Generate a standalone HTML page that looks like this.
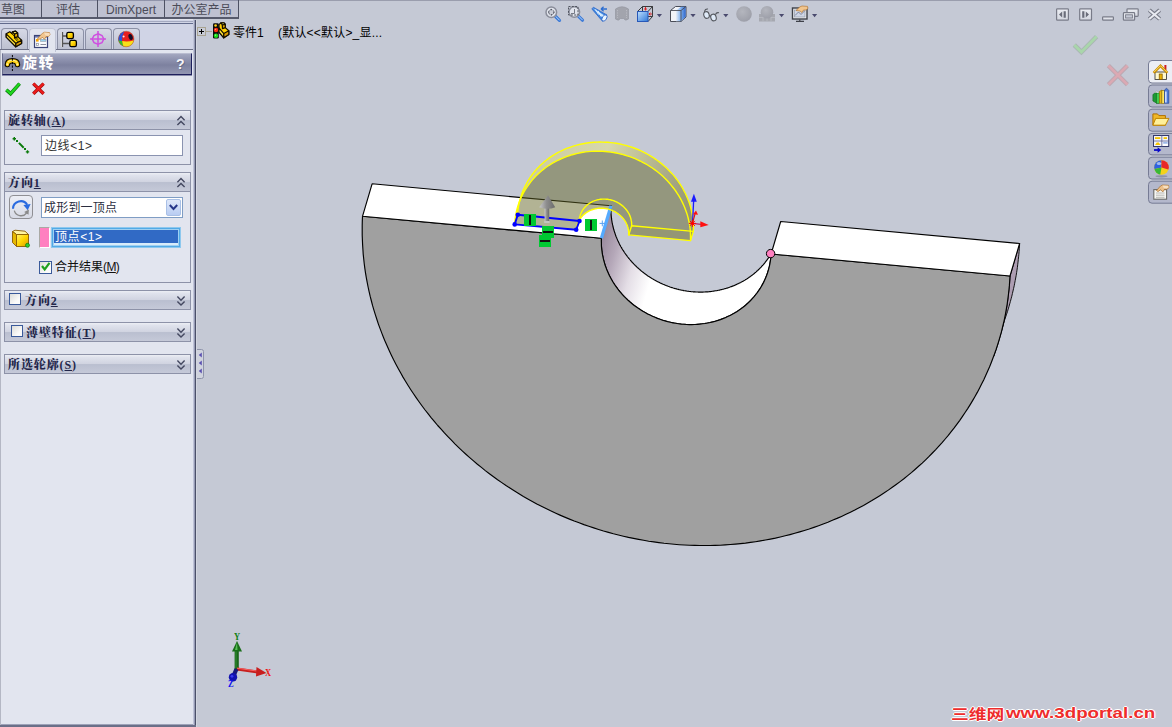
<!DOCTYPE html>
<html lang="zh-CN"><head><meta charset="utf-8"><title>SolidWorks - 旋转</title>
<style>
html,body{margin:0;padding:0;}
body{width:1172px;height:727px;overflow:hidden;background:#c5c9d5;font-family:"Liberation Sans","Noto Sans CJK SC",sans-serif;font-size:12px;color:#222;}
#app{position:relative;width:1172px;height:727px;overflow:hidden;background:#c5c9d5;}
.abs{position:absolute;}
/* top tabs */
#tabs{position:absolute;left:0;top:0;height:19px;width:239px;}
#tabs .tab{position:absolute;top:0;height:15px;padding-top:2px;border-right:1px solid #4d5163;border-bottom:2px solid #565a6c;background:#bec1d1;color:#4b4c58;font-size:12px;line-height:16px;text-align:center;white-space:nowrap;overflow:hidden;box-shadow:inset 0 1px 0 #9094aa;}
#topline{position:absolute;left:239px;top:0;width:933px;height:1px;background:#9a9dad;}
/* left panel */
#panel{position:absolute;left:0;top:20px;width:193px;height:704px;background:#e2e5ef;border-bottom:1px solid #9da2b8;}
#pbot{position:absolute;left:0;top:725px;width:196px;height:2px;background:#6a6f88;}
#pborder{position:absolute;left:193px;top:20px;width:4px;height:707px;background:linear-gradient(90deg,#bfc3d8 0 1px,#959ab4 1px 2px,#4b5069 2px 3px,#d3d6e0 3px 4px);}
#tabsub{position:absolute;left:0;top:19px;width:193px;height:1px;background:#dfe2ec;}
#pleft{position:absolute;left:0;top:20px;width:1px;height:707px;background:#b4b7c4;}
#ptop{position:absolute;left:0;top:20px;width:193px;height:30px;background:#d0d4e6;}
#ptop .l1{position:absolute;left:0;top:1px;width:193px;height:1px;background:#a3a8bf;}
#ptop .l2{position:absolute;left:0;top:3px;width:193px;height:1px;background:#626b8c;}
#ptop .l3{position:absolute;left:0;top:29px;width:193px;height:1px;background:#6c7086;z-index:1;}
.itab{position:absolute;top:8px;height:20px;width:25px;border:1px solid #8c91a6;border-bottom:none;border-radius:4px 4px 0 0;background:linear-gradient(#d6d9e6,#bcc0d0);}
.itab.act{background:#e2e5ef;height:23px;border-color:#c0c4d4;z-index:2;}
#title{position:absolute;left:2px;top:53px;width:188px;height:20px;background:linear-gradient(#a3a7c0 0%,#8a8eab 35%,#7d819f 55%,#9296b2 100%);border-right:1px solid #1d1f5c;border-bottom:1px solid #1d1f5c;box-shadow:0 1px 0 rgba(29,31,92,0.45);border-left:1px solid #6a6e8e;border-top:1px solid #b9bcd0;box-sizing:content-box;}
#title .t{position:absolute;left:19px;top:-1px;font-size:15px;font-weight:bold;color:#fff;line-height:20px;letter-spacing:1.6px;}
#title .q{position:absolute;left:173px;top:0;font-size:14px;font-weight:bold;color:#f4f4f8;line-height:20px;text-shadow:1px 1px 0 #6a6e8a;}
.sec{position:absolute;left:4px;width:185px;border:1px solid #8d92a8;background:#e2e5ef;}
.sec .hd{position:absolute;left:0;top:0;width:185px;height:18px;background:linear-gradient(#eceef4 0%,#dfe2ec 14%,#d1d4e1 48%,#babfd0 53%,#c5c9d8 100%);border-bottom:1px solid #8d92a8;}
.sec.closed .hd{border-bottom:none;}
.sec .hd .tx{position:absolute;left:3px;top:1px;line-height:18px;font-size:12px;font-weight:900;color:#23264a;white-space:nowrap;letter-spacing:0.9px;font-family:"Liberation Serif","Noto Serif CJK SC",serif;}
.sec .hd svg{position:absolute;left:171px;top:4px;}
.cb{position:absolute;width:10px;height:10px;border:1px solid #3a5a9a;background:linear-gradient(135deg,#dcdcd8,#fbfbfa 70%);}
.inp{position:absolute;border:1px solid #8a93b0;background:#fff;font-size:12px;color:#333;white-space:nowrap;}

.wm{line-height:18px;font-weight:bold;color:#ee2c2c;white-space:nowrap;text-shadow:-1px 0 #fff,1px 0 #fff,0 -1px #fff,0 1px #fff;transform-origin:0 0;}
.ax{font-family:'Liberation Serif',serif;font-weight:bold;font-size:10px;line-height:10px;transform-origin:0 0;transform:scaleX(0.85);}

</style></head>
<body>
<div id="app">

<svg id="model" width="1172" height="727" viewBox="0 0 1172 727" style="position:absolute;left:0;top:0">
<defs>
<linearGradient id="gi" gradientUnits="userSpaceOnUse" x1="600" y1="238" x2="658" y2="255">
<stop offset="0" stop-color="#96869a"/><stop offset="0.3" stop-color="#b5a8b9"/><stop offset="0.65" stop-color="#e4dee6"/><stop offset="1" stop-color="#ffffff"/>
</linearGradient>
<linearGradient id="go" gradientUnits="userSpaceOnUse" x1="520" y1="150" x2="700" y2="200">
<stop offset="0" stop-color="#c9c99a"/><stop offset="0.45" stop-color="#d9d9a8"/><stop offset="1" stop-color="#8a8a66"/>
</linearGradient>
</defs>
<g stroke="#000" stroke-width="1.15" stroke-linejoin="round">
<path d="M601.4,238.3 L601.4,238.9 L601.4,239.6 L601.4,240.2 L601.3,240.8 L601.3,241.4 L601.3,242.0 L601.3,242.6 L601.4,243.3 L601.4,243.9 L601.4,244.5 L601.4,245.1 L601.4,245.7 L601.5,246.3 L601.5,247.0 L601.6,247.6 L601.6,248.2 L601.7,248.8 L601.7,249.4 L601.8,250.0 L601.9,250.7 L602.0,251.3 L602.0,251.9 L602.1,252.5 L602.2,253.1 L602.3,253.7 L602.4,254.4 L602.5,255.0 L602.6,255.6 L602.8,256.2 L602.9,256.8 L603.0,257.4 L603.2,258.0 L603.3,258.6 L603.4,259.3 L603.6,259.9 L603.7,260.5 L603.9,261.1 L604.1,261.7 L604.2,262.3 L604.4,262.9 L604.6,263.5 L604.8,264.1 L605.0,264.7 L605.2,265.3 L605.4,265.9 L605.6,266.5 L605.8,267.1 L606.0,267.7 L606.2,268.3 L606.4,268.9 L606.7,269.5 L606.9,270.0 L607.2,270.6 L607.4,271.2 L607.7,271.8 L607.9,272.4 L608.2,273.0 L608.4,273.5 L608.7,274.1 L609.0,274.7 L609.3,275.3 L609.5,275.8 L609.8,276.4 L610.1,277.0 L610.4,277.6 L610.7,278.1 L611.0,278.7 L611.3,279.2 L611.7,279.8 L612.0,280.4 L612.3,280.9 L612.6,281.5 L613.0,282.0 L613.3,282.6 L613.7,283.1 L614.0,283.7 L614.4,284.2 L614.7,284.7 L615.1,285.3 L615.5,285.8 L615.8,286.3 L616.2,286.9 L616.6,287.4 L617.0,287.9 L617.4,288.4 L617.7,289.0 L618.1,289.5 L618.5,290.0 L618.9,290.5 L619.4,291.0 L619.8,291.5 L620.2,292.0 L620.6,292.5 L621.0,293.0 L621.5,293.5 L621.9,294.0 L622.3,294.5 L622.8,295.0 L623.2,295.5 L623.7,295.9 L624.1,296.4 L624.6,296.9 L625.1,297.3 L625.5,297.8 L626.0,298.3 L626.5,298.7 L626.9,299.2 L627.4,299.6 L627.9,300.1 L628.4,300.5 L628.9,301.0 L629.4,301.4 L629.9,301.9 L630.4,302.3 L630.9,302.7 L631.4,303.2 L631.9,303.6 L632.4,304.0 L632.9,304.4 L633.5,304.8 L634.0,305.2 L634.5,305.6 L635.0,306.0 L635.6,306.4 L636.1,306.8 L636.7,307.2 L637.2,307.6 L637.7,308.0 L638.3,308.4 L638.8,308.7 L639.4,309.1 L640.0,309.5 L640.5,309.8 L641.1,310.2 L641.7,310.5 L642.2,310.9 L642.8,311.2 L643.4,311.6 L644.0,311.9 L644.5,312.3 L645.1,312.6 L645.7,312.9 L646.3,313.2 L646.9,313.6 L647.5,313.9 L648.1,314.2 L648.7,314.5 L649.3,314.8 L649.9,315.1 L650.5,315.4 L651.1,315.7 L651.7,315.9 L652.3,316.2 L652.9,316.5 L653.5,316.8 L654.2,317.0 L654.8,317.3 L655.4,317.6 L656.0,317.8 L656.7,318.1 L657.3,318.3 L657.9,318.5 L658.5,318.8 L659.2,319.0 L659.8,319.2 L660.4,319.5 L661.1,319.7 L661.7,319.9 L662.4,320.1 L663.0,320.3 L663.6,320.5 L664.3,320.7 L664.9,320.9 L665.6,321.1 L666.2,321.3 L666.9,321.4 L667.5,321.6 L668.2,321.8 L668.8,321.9 L669.5,322.1 L670.2,322.2 L670.8,322.4 L671.5,322.5 L672.1,322.7 L672.8,322.8 L673.4,322.9 L674.1,323.1 L674.8,323.2 L675.4,323.3 L676.1,323.4 L676.8,323.5 L677.4,323.6 L678.1,323.7 L678.8,323.8 L679.4,323.9 L680.1,324.0 L680.8,324.0 L681.4,324.1 L682.1,324.2 L682.8,324.2 L683.4,324.3 L684.1,324.3 L684.8,324.4 L685.4,324.4 L686.1,324.5 L686.8,324.5 L687.4,324.5 L688.1,324.5 L688.8,324.6 L689.4,324.6 L690.1,324.6 L690.8,324.6 L691.4,324.6 L692.1,324.6 L692.8,324.6 L693.4,324.6 L694.1,324.5 L694.8,324.5 L695.4,324.5 L696.1,324.4 L696.8,324.4 L697.4,324.4 L698.1,324.3 L698.8,324.3 L699.4,324.2 L700.1,324.1 L700.7,324.1 L701.4,324.0 L702.1,323.9 L702.7,323.8 L703.4,323.7 L704.0,323.6 L704.7,323.5 L705.3,323.4 L706.0,323.3 L706.6,323.2 L707.3,323.1 L707.9,323.0 L708.6,322.8 L709.2,322.7 L709.9,322.6 L710.5,322.4 L711.1,322.3 L711.8,322.1 L712.4,322.0 L713.0,321.8 L713.7,321.7 L714.3,321.5 L714.9,321.3 L715.6,321.1 L716.2,321.0 L716.8,320.8 L717.4,320.6 L718.1,320.4 L718.7,320.2 L719.3,320.0 L719.9,319.8 L720.5,319.5 L721.1,319.3 L721.7,319.1 L722.4,318.9 L723.0,318.6 L723.6,318.4 L724.2,318.2 L724.8,317.9 L725.3,317.7 L725.9,317.4 L726.5,317.1 L727.1,316.9 L727.7,316.6 L728.3,316.3 L728.9,316.1 L729.4,315.8 L730.0,315.5 L730.6,315.2 L731.2,314.9 L731.7,314.6 L732.3,314.3 L732.8,314.0 L733.4,313.7 L734.0,313.4 L734.5,313.0 L735.1,312.7 L735.6,312.4 L736.1,312.0 L736.7,311.7 L737.2,311.4 L737.8,311.0 L738.3,310.7 L738.8,310.3 L739.3,310.0 L739.9,309.6 L740.4,309.2 L740.9,308.9 L741.4,308.5 L741.9,308.1 L742.4,307.7 L742.9,307.4 L743.4,307.0 L743.9,306.6 L744.4,306.2 L744.9,305.8 L745.3,305.4 L745.8,305.0 L746.3,304.6 L746.8,304.1 L747.2,303.7 L747.7,303.3 L748.2,302.9 L748.6,302.5 L749.1,302.0 L749.5,301.6 L750.0,301.1 L750.4,300.7 L750.8,300.3 L751.3,299.8 L751.7,299.4 L752.1,298.9 L752.5,298.4 L753.0,298.0 L753.4,297.5 L753.8,297.1 L754.2,296.6 L754.6,296.1 L755.0,295.6 L755.4,295.1 L755.7,294.7 L756.1,294.2 L756.5,293.7 L756.9,293.2 L757.3,292.7 L757.6,292.2 L758.0,291.7 L758.3,291.2 L758.7,290.7 L759.0,290.2 L759.4,289.7 L759.7,289.1 L760.0,288.6 L760.4,288.1 L760.7,287.6 L761.0,287.1 L761.3,286.5 L761.6,286.0 L761.9,285.5 L762.2,284.9 L762.5,284.4 L762.8,283.9 L763.1,283.3 L763.4,282.8 L763.7,282.2 L763.9,281.7 L764.2,281.1 L764.5,280.6 L764.7,280.0 L765.0,279.4 L765.2,278.9 L765.5,278.3 L765.7,277.8 L765.9,277.2 L766.2,276.6 L766.4,276.1 L766.6,275.5 L766.8,274.9 L767.0,274.3 L767.2,273.8 L767.4,273.2 L767.6,272.6 L767.8,272.0 L768.0,271.4 L768.2,270.8 L768.4,270.3 L768.5,269.7 L768.7,269.1 L768.8,268.5 L769.0,267.9 L769.1,267.3 L769.3,266.7 L769.4,266.1 L769.6,265.5 L769.7,264.9 L769.8,264.3 L769.9,263.7 L770.0,263.1 L770.1,262.5 L770.2,261.9 L770.3,261.3 L770.4,260.7 L770.5,260.1 L770.6,259.5 L770.7,258.9 L770.7,258.3 L770.8,257.6 L770.9,257.0 L770.9,256.4 L771.0,255.8 L771.0,255.2 L771.0,254.6 L771.1,254.0 L770.9,254.0 L770.6,254.6 L770.3,255.1 L770.0,255.6 L769.6,256.1 L769.3,256.6 L769.0,257.2 L768.6,257.7 L768.3,258.2 L767.9,258.7 L767.6,259.2 L767.2,259.7 L766.9,260.2 L766.5,260.7 L766.1,261.2 L765.7,261.7 L765.3,262.2 L765.0,262.6 L764.6,263.1 L764.2,263.6 L763.8,264.1 L763.4,264.6 L763.0,265.0 L762.6,265.5 L762.1,265.9 L761.7,266.4 L761.3,266.9 L760.9,267.3 L760.4,267.8 L760.0,268.2 L759.6,268.6 L759.1,269.1 L758.7,269.5 L758.2,270.0 L757.8,270.4 L757.3,270.8 L756.8,271.2 L756.4,271.6 L755.9,272.1 L755.4,272.5 L754.9,272.9 L754.5,273.3 L754.0,273.7 L753.5,274.1 L753.0,274.5 L752.5,274.9 L752.0,275.2 L751.5,275.6 L751.0,276.0 L750.5,276.4 L750.0,276.7 L749.5,277.1 L748.9,277.5 L748.4,277.8 L747.9,278.2 L747.4,278.5 L746.8,278.9 L746.3,279.2 L745.7,279.5 L745.2,279.9 L744.7,280.2 L744.1,280.5 L743.6,280.9 L743.0,281.2 L742.4,281.5 L741.9,281.8 L741.3,282.1 L740.8,282.4 L740.2,282.7 L739.6,283.0 L739.0,283.3 L738.5,283.6 L737.9,283.8 L737.3,284.1 L736.7,284.4 L736.1,284.6 L735.5,284.9 L734.9,285.2 L734.4,285.4 L733.8,285.7 L733.2,285.9 L732.6,286.1 L732.0,286.4 L731.3,286.6 L730.7,286.8 L730.1,287.0 L729.5,287.3 L728.9,287.5 L728.3,287.7 L727.7,287.9 L727.0,288.1 L726.4,288.3 L725.8,288.5 L725.2,288.6 L724.5,288.8 L723.9,289.0 L723.3,289.2 L722.6,289.3 L722.0,289.5 L721.4,289.6 L720.7,289.8 L720.1,289.9 L719.5,290.1 L718.8,290.2 L718.2,290.3 L717.5,290.5 L716.9,290.6 L716.2,290.7 L715.6,290.8 L714.9,290.9 L714.3,291.0 L713.6,291.1 L713.0,291.2 L712.3,291.3 L711.7,291.4 L711.0,291.5 L710.3,291.6 L709.7,291.6 L709.0,291.7 L708.4,291.8 L707.7,291.8 L707.0,291.9 L706.4,291.9 L705.7,291.9 L705.0,292.0 L704.4,292.0 L703.7,292.0 L703.0,292.1 L702.4,292.1 L701.7,292.1 L701.0,292.1 L700.4,292.1 L699.7,292.1 L699.0,292.1 L698.4,292.1 L697.7,292.0 L697.0,292.0 L696.4,292.0 L695.7,292.0 L695.0,291.9 L694.4,291.9 L693.7,291.8 L693.0,291.8 L692.4,291.7 L691.7,291.7 L691.0,291.6 L690.4,291.5 L689.7,291.5 L689.0,291.4 L688.4,291.3 L687.7,291.2 L687.0,291.1 L686.4,291.0 L685.7,290.9 L685.0,290.8 L684.4,290.7 L683.7,290.6 L683.0,290.4 L682.4,290.3 L681.7,290.2 L681.1,290.0 L680.4,289.9 L679.8,289.7 L679.1,289.6 L678.4,289.4 L677.8,289.3 L677.1,289.1 L676.5,288.9 L675.8,288.8 L675.2,288.6 L674.5,288.4 L673.9,288.2 L673.2,288.0 L672.6,287.8 L672.0,287.6 L671.3,287.4 L670.7,287.2 L670.0,287.0 L669.4,286.7 L668.8,286.5 L668.1,286.3 L667.5,286.0 L666.9,285.8 L666.3,285.6 L665.6,285.3 L665.0,285.1 L664.4,284.8 L663.8,284.5 L663.1,284.3 L662.5,284.0 L661.9,283.7 L661.3,283.4 L660.7,283.2 L660.1,282.9 L659.5,282.6 L658.9,282.3 L658.3,282.0 L657.7,281.7 L657.1,281.4 L656.5,281.1 L655.9,280.7 L655.3,280.4 L654.7,280.1 L654.1,279.8 L653.6,279.4 L653.0,279.1 L652.4,278.7 L651.8,278.4 L651.3,278.0 L650.7,277.7 L650.1,277.3 L649.6,277.0 L649.0,276.6 L648.4,276.2 L647.9,275.9 L647.3,275.5 L646.8,275.1 L646.3,274.7 L645.7,274.3 L645.2,273.9 L644.6,273.5 L644.1,273.1 L643.6,272.7 L643.1,272.3 L642.5,271.9 L642.0,271.5 L641.5,271.1 L641.0,270.7 L640.5,270.2 L640.0,269.8 L639.5,269.4 L639.0,268.9 L638.5,268.5 L638.0,268.0 L637.5,267.6 L637.0,267.1 L636.5,266.7 L636.1,266.2 L635.6,265.8 L635.1,265.3 L634.7,264.8 L634.2,264.4 L633.7,263.9 L633.3,263.4 L632.8,263.0 L632.4,262.5 L631.9,262.0 L631.5,261.5 L631.1,261.0 L630.6,260.5 L630.2,260.0 L629.8,259.5 L629.4,259.0 L629.0,258.5 L628.5,258.0 L628.1,257.5 L627.7,257.0 L627.3,256.5 L627.0,255.9 L626.6,255.4 L626.2,254.9 L625.8,254.4 L625.4,253.8 L625.1,253.3 L624.7,252.8 L624.3,252.2 L624.0,251.7 L623.6,251.2 L623.3,250.6 L622.9,250.1 L622.6,249.5 L622.2,249.0 L621.9,248.4 L621.6,247.9 L621.3,247.3 L620.9,246.7 L620.6,246.2 L620.3,245.6 L620.0,245.1 L619.7,244.5 L619.4,243.9 L619.1,243.3 L618.9,242.8 L618.6,242.2 L618.3,241.6 L618.0,241.0 L617.8,240.5 L617.5,239.9 L617.3,239.3 L617.0,238.7 L616.8,238.1 L616.5,237.5 L616.3,237.0 L616.0,236.4 L615.8,235.8 L615.6,235.2 L615.4,234.6 L615.2,234.0 L615.0,233.4 L614.8,232.8 L614.6,232.2 L614.4,231.6 L614.2,231.0 L614.0,230.4 L613.8,229.8 L613.7,229.2 L613.5,228.6 L613.3,228.0 L613.2,227.4 L613.0,226.8 L612.9,226.1 L612.8,225.5 L612.6,224.9 L612.5,224.3 L612.4,223.7 L612.2,223.1 L612.1,222.5 L612.0,221.9 L611.9,221.2 L611.8,220.6 L611.7,220.0 L611.6,219.4 L611.6,218.8 L611.5,218.2 L611.4,217.5 L611.3,216.9 L611.3,216.3 L611.2,215.7 L611.2,215.1 L611.1,214.5 L611.1,213.8 L611.0,213.2 L611.0,212.6 L611.0,212.0 L611.0,211.4 L611.0,210.8 L610.9,210.1 L610.9,209.5 L610.9,208.9 L610.9,208.3 L611.0,207.7 L611.0,207.1 L611.0,206.4 L611.0,205.8Z" fill="url(#gi)"/>
<path d="M1010.0,276.0 L1009.9,278.7 L1009.7,281.3 L1009.5,284.0 L1009.3,286.7 L1009.0,289.3 L1008.7,292.0 L1008.4,294.6 L1008.1,297.3 L1007.8,299.9 L1007.4,302.6 L1007.0,305.2 L1006.6,307.8 L1006.1,310.5 L1005.6,313.1 L1005.1,315.7 L1004.6,318.3 L1004.0,320.9 L1003.4,323.5 L1002.8,326.1 L1002.2,328.7 L1001.5,331.3 L1000.8,333.9 L1000.1,336.4 L999.4,339.0 L998.6,341.5 L997.9,344.1 L997.0,346.6 L996.2,349.1 L995.3,351.7 L994.5,354.2 L993.5,356.7 L1004.1,321.7 L1004.9,319.2 L1005.8,316.6 L1006.6,314.1 L1007.5,311.6 L1008.2,309.0 L1009.0,306.5 L1009.7,303.9 L1010.4,301.4 L1011.1,298.8 L1011.8,296.2 L1012.4,293.6 L1013.0,291.0 L1013.6,288.4 L1014.2,285.8 L1014.7,283.2 L1015.2,280.6 L1015.7,278.0 L1016.2,275.3 L1016.6,272.7 L1017.0,270.1 L1017.4,267.4 L1017.7,264.8 L1018.0,262.1 L1018.3,259.5 L1018.6,256.8 L1018.9,254.2 L1019.1,251.5 L1019.3,248.8 L1019.5,246.2 L1019.6,243.5Z" fill="#ad9db2" stroke-width="0.9"/>
<path d="M1010.0,276.0 L1009.7,280.7 L1009.4,285.4 L1008.9,290.1 L1008.4,294.7 L1007.8,299.4 L1007.2,304.0 L1006.4,308.7 L1005.6,313.3 L1004.7,317.9 L1003.7,322.5 L1002.6,327.0 L1001.5,331.6 L1000.2,336.1 L998.9,340.6 L997.5,345.1 L996.1,349.5 L994.5,353.9 L992.9,358.3 L991.2,362.7 L989.5,367.0 L987.6,371.3 L985.7,375.6 L983.7,379.9 L981.6,384.1 L979.5,388.2 L977.3,392.4 L975.0,396.5 L972.6,400.6 L970.2,404.6 L967.7,408.6 L965.1,412.5 L962.5,416.4 L959.8,420.3 L957.0,424.1 L954.2,427.9 L951.2,431.6 L948.3,435.3 L945.2,439.0 L942.1,442.6 L938.9,446.1 L935.7,449.6 L932.4,453.0 L929.1,456.4 L925.6,459.8 L922.2,463.1 L918.6,466.3 L915.0,469.5 L911.4,472.6 L907.7,475.6 L903.9,478.7 L900.1,481.6 L896.2,484.5 L892.3,487.3 L888.3,490.1 L884.3,492.8 L880.2,495.4 L876.1,498.0 L871.9,500.6 L867.7,503.0 L863.5,505.4 L859.1,507.7 L854.8,510.0 L850.4,512.2 L846.0,514.3 L841.5,516.4 L837.0,518.4 L832.4,520.3 L827.9,522.2 L823.2,524.0 L818.6,525.7 L813.9,527.4 L809.2,529.0 L804.4,530.5 L799.7,531.9 L794.8,533.3 L790.0,534.6 L785.2,535.8 L780.3,537.0 L775.4,538.1 L770.4,539.1 L765.5,540.0 L760.5,540.9 L755.5,541.7 L750.5,542.4 L745.5,543.1 L740.5,543.6 L735.4,544.1 L730.3,544.5 L725.3,544.9 L720.2,545.2 L715.1,545.4 L710.0,545.5 L704.9,545.5 L699.8,545.5 L694.7,545.4 L689.6,545.2 L684.4,545.0 L679.3,544.7 L674.2,544.3 L669.1,543.8 L664.0,543.3 L658.9,542.6 L653.8,541.9 L648.7,541.2 L643.6,540.3 L638.6,539.4 L633.5,538.4 L628.5,537.4 L623.4,536.2 L618.4,535.0 L613.4,533.8 L608.5,532.4 L603.5,531.0 L598.6,529.5 L593.7,527.9 L588.8,526.3 L583.9,524.6 L579.1,522.8 L574.2,521.0 L569.5,519.1 L564.7,517.1 L560.0,515.1 L555.3,513.0 L550.6,510.8 L546.0,508.5 L541.4,506.2 L536.8,503.9 L532.3,501.4 L527.8,498.9 L523.4,496.4 L519.0,493.7 L514.6,491.0 L510.3,488.3 L506.0,485.5 L501.8,482.6 L497.6,479.7 L493.5,476.7 L489.4,473.7 L485.3,470.6 L481.4,467.4 L477.4,464.2 L473.5,460.9 L469.7,457.6 L465.9,454.2 L462.2,450.8 L458.5,447.3 L454.9,443.8 L451.4,440.2 L447.9,436.6 L444.4,432.9 L441.1,429.2 L437.7,425.5 L434.5,421.6 L431.3,417.8 L428.2,413.9 L425.1,410.0 L422.1,406.0 L419.2,402.0 L416.3,397.9 L413.5,393.8 L410.8,389.7 L408.1,385.5 L405.5,381.3 L403.0,377.1 L400.6,372.8 L398.2,368.5 L395.9,364.2 L393.6,359.8 L391.5,355.5 L389.4,351.0 L387.4,346.6 L385.4,342.1 L383.6,337.7 L381.8,333.1 L380.1,328.6 L378.4,324.1 L376.9,319.5 L375.4,314.9 L374.0,310.3 L372.6,305.7 L371.4,301.0 L370.2,296.4 L369.1,291.7 L368.1,287.0 L367.2,282.3 L366.3,277.6 L365.5,272.9 L364.8,268.2 L364.2,263.5 L363.7,258.8 L363.2,254.1 L362.9,249.3 L362.6,244.6 L362.4,239.9 L362.2,235.2 L362.2,230.4 L362.2,225.7 L362.3,221.0 L362.5,216.3 L601.4,238.3 L601.3,240.8 L601.4,243.3 L601.4,245.8 L601.6,248.3 L601.9,250.8 L602.2,253.2 L602.7,255.7 L603.2,258.2 L603.8,260.6 L604.5,263.1 L605.2,265.5 L606.1,267.9 L607.0,270.3 L608.0,272.6 L609.1,275.0 L610.3,277.3 L611.5,279.5 L612.8,281.8 L614.2,284.0 L615.7,286.1 L617.2,288.2 L618.8,290.3 L620.5,292.4 L622.2,294.4 L624.0,296.3 L625.9,298.2 L627.8,300.0 L629.8,301.8 L631.8,303.5 L633.9,305.2 L636.1,306.8 L638.3,308.3 L640.5,309.8 L642.8,311.3 L645.2,312.6 L647.5,313.9 L650.0,315.1 L652.4,316.3 L654.9,317.3 L657.4,318.4 L660.0,319.3 L662.5,320.2 L665.1,320.9 L667.8,321.7 L670.4,322.3 L673.0,322.9 L675.7,323.3 L678.4,323.7 L681.1,324.1 L683.8,324.3 L686.5,324.5 L689.2,324.6 L691.8,324.6 L694.5,324.5 L697.2,324.4 L699.9,324.1 L702.5,323.8 L705.2,323.5 L707.8,323.0 L710.4,322.5 L712.9,321.9 L715.5,321.2 L718.0,320.4 L720.5,319.6 L722.9,318.6 L725.3,317.7 L727.7,316.6 L730.1,315.5 L732.3,314.3 L734.6,313.0 L736.8,311.7 L738.9,310.3 L741.0,308.8 L743.0,307.3 L745.0,305.7 L746.9,304.0 L748.8,302.3 L750.6,300.5 L752.3,298.7 L753.9,296.9 L755.5,294.9 L757.1,293.0 L758.5,290.9 L759.9,288.9 L761.2,286.8 L762.4,284.6 L763.6,282.4 L764.6,280.2 L765.6,277.9 L766.6,275.6 L767.4,273.3 L768.1,271.0 L768.8,268.6 L769.4,266.2 L769.9,263.8 L770.3,261.4 L770.7,258.9 L770.9,256.4 L771.1,254.0Z" fill="#a0a0a0"/>
<path d="M362.5,216.3 L372.1,183.8 L611.0,205.8 L601.4,238.3Z" fill="#ffffff"/>
<path d="M771.1,254.0 L780.7,221.5 L1019.6,243.5 L1010.0,276.0Z" fill="#ffffff"/>
</g>
<!-- preview body -->
<g stroke="none">
<path d="M517.5,215.2 L517.7,212.7 L517.9,210.1 L518.3,207.6 L518.7,205.0 L519.2,202.5 L519.9,200.1 L520.5,197.6 L521.3,195.2 L522.2,192.8 L523.1,190.4 L524.2,188.0 L525.3,185.7 L526.5,183.5 L527.7,181.2 L529.1,179.1 L530.5,176.9 L532.0,174.8 L533.6,172.8 L535.3,170.8 L537.0,168.8 L538.8,167.0 L540.6,165.1 L542.5,163.4 L544.5,161.6 L546.6,160.0 L548.7,158.4 L550.8,156.9 L553.1,155.4 L555.3,154.1 L557.7,152.7 L560.0,151.5 L562.4,150.3 L564.9,149.2 L567.4,148.2 L569.9,147.3 L572.5,146.4 L575.1,145.6 L577.7,144.9 L580.4,144.2 L583.1,143.7 L585.8,143.2 L588.5,142.8 L591.3,142.5 L594.1,142.3 L596.8,142.1 L599.6,142.0 L602.4,142.1 L605.2,142.2 L608.0,142.3 L610.8,142.6 L613.6,142.9 L616.3,143.3 L619.1,143.8 L621.8,144.4 L624.6,145.1 L627.3,145.8 L630.0,146.6 L632.7,147.5 L635.3,148.5 L637.9,149.5 L640.5,150.7 L643.0,151.9 L645.5,153.1 L648.0,154.5 L650.4,155.9 L652.8,157.3 L655.1,158.9 L657.4,160.5 L659.6,162.1 L661.8,163.9 L663.9,165.7 L666.0,167.5 L668.0,169.4 L669.9,171.4 L671.8,173.4 L673.6,175.4 L675.3,177.5 L677.0,179.7 L678.5,181.9 L680.1,184.1 L681.5,186.4 L682.9,188.7 L684.1,191.1 L685.4,193.5 L686.5,195.9 L687.5,198.3 L688.5,200.8 L689.4,203.3 L690.2,205.8 L690.9,208.3 L691.5,210.9 L692.0,213.4 L692.5,216.0 L692.8,218.5 L693.1,221.1 L693.3,223.7 L693.4,226.3 L693.4,228.9 L693.3,231.4 L690.5,240.6 L690.5,238.0 L690.5,235.4 L690.4,232.8 L690.3,230.3 L690.0,227.7 L689.6,225.1 L689.2,222.5 L688.6,220.0 L688.0,217.4 L687.3,214.9 L686.5,212.4 L685.6,209.9 L684.7,207.5 L683.6,205.0 L682.5,202.6 L681.3,200.2 L680.0,197.9 L678.7,195.6 L677.2,193.3 L675.7,191.0 L674.1,188.8 L672.4,186.7 L670.7,184.6 L668.9,182.5 L667.1,180.5 L665.1,178.5 L663.1,176.6 L661.1,174.8 L659.0,173.0 L656.8,171.3 L654.6,169.6 L652.3,168.0 L649.9,166.5 L647.6,165.0 L645.2,163.6 L642.7,162.3 L640.2,161.0 L637.6,159.8 L635.1,158.7 L632.5,157.6 L629.8,156.7 L627.1,155.8 L624.4,155.0 L621.7,154.2 L619.0,153.6 L616.2,153.0 L613.5,152.5 L610.7,152.1 L607.9,151.7 L605.1,151.5 L602.3,151.3 L599.6,151.2 L596.8,151.2 L594.0,151.3 L591.2,151.4 L588.4,151.6 L585.7,151.9 L583.0,152.3 L580.3,152.8 L577.6,153.4 L574.9,154.0 L572.3,154.7 L569.7,155.5 L567.1,156.4 L564.6,157.3 L562.1,158.4 L559.6,159.5 L557.2,160.6 L554.8,161.9 L552.5,163.2 L550.2,164.6 L548.0,166.0 L545.8,167.5 L543.7,169.1 L541.7,170.8 L539.7,172.5 L537.8,174.3 L535.9,176.1 L534.1,178.0 L532.4,179.9 L530.8,181.9 L529.2,184.0 L527.7,186.1 L526.3,188.2 L524.9,190.4 L523.6,192.6 L522.4,194.9 L521.3,197.2 L520.3,199.5 L519.3,201.9 L518.5,204.3 L517.7,206.7 L517.0,209.2 L516.4,211.7 L515.9,214.2 L515.4,216.7 L515.1,219.2 L514.8,221.8 L514.7,224.4Z" fill="url(#go)" fill-opacity="0.9"/>
<path d="M514.7,224.4 L514.8,221.8 L515.1,219.2 L515.4,216.7 L515.9,214.2 L516.4,211.7 L517.0,209.2 L517.7,206.7 L518.5,204.3 L519.3,201.9 L520.3,199.5 L521.3,197.2 L522.4,194.9 L523.6,192.6 L524.9,190.4 L526.3,188.2 L527.7,186.1 L529.2,184.0 L530.8,181.9 L532.4,179.9 L534.1,178.0 L535.9,176.1 L537.8,174.3 L539.7,172.5 L541.7,170.8 L543.7,169.1 L545.8,167.5 L548.0,166.0 L550.2,164.6 L552.5,163.2 L554.8,161.9 L557.2,160.6 L559.6,159.5 L562.1,158.4 L564.6,157.3 L567.1,156.4 L569.7,155.5 L572.3,154.7 L574.9,154.0 L577.6,153.4 L580.3,152.8 L583.0,152.3 L585.7,151.9 L588.4,151.6 L591.2,151.4 L594.0,151.3 L596.8,151.2 L599.6,151.2 L602.3,151.3 L605.1,151.5 L607.9,151.7 L610.7,152.1 L613.5,152.5 L616.2,153.0 L619.0,153.6 L621.7,154.2 L624.4,155.0 L627.1,155.8 L629.8,156.7 L632.5,157.6 L635.1,158.7 L637.6,159.8 L640.2,161.0 L642.7,162.3 L645.2,163.6 L647.6,165.0 L649.9,166.5 L652.3,168.0 L654.6,169.6 L656.8,171.3 L659.0,173.0 L661.1,174.8 L663.1,176.6 L665.1,178.5 L667.1,180.5 L668.9,182.5 L670.7,184.6 L672.4,186.7 L674.1,188.8 L675.7,191.0 L677.2,193.3 L678.7,195.6 L680.0,197.9 L681.3,200.2 L682.5,202.6 L683.6,205.0 L684.7,207.5 L685.6,209.9 L686.5,212.4 L687.3,214.9 L688.0,217.4 L688.6,220.0 L689.2,222.5 L689.6,225.1 L690.0,227.7 L690.3,230.3 L690.4,232.8 L690.5,235.4 L690.5,238.0 L690.5,240.6 L628.8,234.9 L628.8,234.1 L628.8,233.3 L628.8,232.6 L628.7,231.8 L628.6,231.0 L628.5,230.3 L628.4,229.5 L628.2,228.7 L628.1,228.0 L627.9,227.2 L627.6,226.5 L627.4,225.7 L627.1,225.0 L626.8,224.3 L626.4,223.6 L626.1,222.8 L625.7,222.1 L625.3,221.4 L624.8,220.8 L624.4,220.1 L623.9,219.4 L623.4,218.8 L622.9,218.2 L622.4,217.6 L621.8,217.0 L621.2,216.4 L620.6,215.8 L620.0,215.3 L619.4,214.7 L618.7,214.2 L618.1,213.7 L617.4,213.2 L616.7,212.8 L616.0,212.3 L615.3,211.9 L614.5,211.5 L613.8,211.1 L613.0,210.8 L612.3,210.4 L611.5,210.1 L610.7,209.8 L609.9,209.6 L609.1,209.3 L608.3,209.1 L607.5,208.9 L606.6,208.7 L605.8,208.6 L605.0,208.5 L604.2,208.4 L603.3,208.3 L602.5,208.2 L601.7,208.2 L600.8,208.2 L600.0,208.2 L599.2,208.3 L598.4,208.3 L597.5,208.4 L596.7,208.6 L595.9,208.7 L595.1,208.9 L594.3,209.1 L593.5,209.3 L592.7,209.5 L592.0,209.8 L591.2,210.0 L590.5,210.4 L589.7,210.7 L589.0,211.0 L588.3,211.4 L587.6,211.8 L587.0,212.2 L586.3,212.6 L585.6,213.1 L585.0,213.6 L584.4,214.1 L583.8,214.6 L583.2,215.1 L582.7,215.6 L582.2,216.2 L581.6,216.8 L581.1,217.4 L580.7,218.0 L580.2,218.6 L579.8,219.3 L579.4,219.9 L579.0,220.6 L578.7,221.2 L578.3,221.9 L578.0,222.6 L577.7,223.3 L577.5,224.1 L577.2,224.8 L577.0,225.5 L576.9,226.3 L576.7,227.0 L576.6,227.8 L576.5,228.5 L576.4,229.3 L576.3,230.0Z" fill="rgb(98,100,36)" fill-opacity="0.49"/>
<path d="M690.5,240.6 L693.3,231.4 L631.6,225.7 L628.8,234.9Z" fill="rgb(150,150,60)" fill-opacity="0.12"/>
<path d="M514.7,224.4 L517.5,215.2 L579.2,220.9 L576.3,230.0Z" fill="#b8b99a" fill-opacity="0.0"/>
</g>
<!-- selected axis edge -->
<path d="M611.0,205.8 L601.4,238.3" stroke="#55aaff" stroke-width="3.2" stroke-linecap="butt"/>
<g fill="none" stroke="#ffff00" stroke-width="1.4" stroke-linejoin="round" stroke-linecap="round">
<path d="M514.7,224.4 L514.8,221.8 L515.1,219.2 L515.4,216.7 L515.9,214.2 L516.4,211.7 L517.0,209.2 L517.7,206.7 L518.5,204.3 L519.3,201.9 L520.3,199.5 L521.3,197.2 L522.4,194.9 L523.6,192.6 L524.9,190.4 L526.3,188.2 L527.7,186.1 L529.2,184.0 L530.8,181.9 L532.4,179.9 L534.1,178.0 L535.9,176.1 L537.8,174.3 L539.7,172.5 L541.7,170.8 L543.7,169.1 L545.8,167.5 L548.0,166.0 L550.2,164.6 L552.5,163.2 L554.8,161.9 L557.2,160.6 L559.6,159.5 L562.1,158.4 L564.6,157.3 L567.1,156.4 L569.7,155.5 L572.3,154.7 L574.9,154.0 L577.6,153.4 L580.3,152.8 L583.0,152.3 L585.7,151.9 L588.4,151.6 L591.2,151.4 L594.0,151.3 L596.8,151.2 L599.6,151.2 L602.3,151.3 L605.1,151.5 L607.9,151.7 L610.7,152.1 L613.5,152.5 L616.2,153.0 L619.0,153.6 L621.7,154.2 L624.4,155.0 L627.1,155.8 L629.8,156.7 L632.5,157.6 L635.1,158.7 L637.6,159.8 L640.2,161.0 L642.7,162.3 L645.2,163.6 L647.6,165.0 L649.9,166.5 L652.3,168.0 L654.6,169.6 L656.8,171.3 L659.0,173.0 L661.1,174.8 L663.1,176.6 L665.1,178.5 L667.1,180.5 L668.9,182.5 L670.7,184.6 L672.4,186.7 L674.1,188.8 L675.7,191.0 L677.2,193.3 L678.7,195.6 L680.0,197.9 L681.3,200.2 L682.5,202.6 L683.6,205.0 L684.7,207.5 L685.6,209.9 L686.5,212.4 L687.3,214.9 L688.0,217.4 L688.6,220.0 L689.2,222.5 L689.6,225.1 L690.0,227.7 L690.3,230.3 L690.4,232.8 L690.5,235.4 L690.5,238.0 L690.5,240.6"/><path d="M517.5,215.2 L517.7,212.7 L517.9,210.1 L518.3,207.6 L518.7,205.0 L519.2,202.5 L519.9,200.1 L520.5,197.6 L521.3,195.2 L522.2,192.8 L523.1,190.4 L524.2,188.0 L525.3,185.7 L526.5,183.5 L527.7,181.2 L529.1,179.1 L530.5,176.9 L532.0,174.8 L533.6,172.8 L535.3,170.8 L537.0,168.8 L538.8,167.0 L540.6,165.1 L542.5,163.4 L544.5,161.6 L546.6,160.0 L548.7,158.4 L550.8,156.9 L553.1,155.4 L555.3,154.1 L557.7,152.7 L560.0,151.5 L562.4,150.3 L564.9,149.2 L567.4,148.2 L569.9,147.3 L572.5,146.4 L575.1,145.6 L577.7,144.9 L580.4,144.2 L583.1,143.7 L585.8,143.2 L588.5,142.8 L591.3,142.5 L594.1,142.3 L596.8,142.1 L599.6,142.0 L602.4,142.1 L605.2,142.2 L608.0,142.3 L610.8,142.6 L613.6,142.9 L616.3,143.3 L619.1,143.8 L621.8,144.4 L624.6,145.1 L627.3,145.8 L630.0,146.6 L632.7,147.5 L635.3,148.5 L637.9,149.5 L640.5,150.7 L643.0,151.9 L645.5,153.1 L648.0,154.5 L650.4,155.9 L652.8,157.3 L655.1,158.9 L657.4,160.5 L659.6,162.1 L661.8,163.9 L663.9,165.7 L666.0,167.5 L668.0,169.4 L669.9,171.4 L671.8,173.4 L673.6,175.4 L675.3,177.5 L677.0,179.7 L678.5,181.9 L680.1,184.1 L681.5,186.4 L682.9,188.7 L684.1,191.1 L685.4,193.5 L686.5,195.9 L687.5,198.3 L688.5,200.8 L689.4,203.3 L690.2,205.8 L690.9,208.3 L691.5,210.9 L692.0,213.4 L692.5,216.0 L692.8,218.5 L693.1,221.1 L693.3,223.7 L693.4,226.3 L693.4,228.9 L693.3,231.4"/><path d="M576.3,230.0 L576.4,229.3 L576.5,228.5 L576.6,227.8 L576.7,227.0 L576.9,226.3 L577.0,225.5 L577.2,224.8 L577.5,224.1 L577.7,223.3 L578.0,222.6 L578.3,221.9 L578.7,221.2 L579.0,220.6 L579.4,219.9 L579.8,219.3 L580.2,218.6 L580.7,218.0 L581.1,217.4 L581.6,216.8 L582.2,216.2 L582.7,215.6 L583.2,215.1 L583.8,214.6 L584.4,214.1 L585.0,213.6 L585.6,213.1 L586.3,212.6 L587.0,212.2 L587.6,211.8 L588.3,211.4 L589.0,211.0 L589.7,210.7 L590.5,210.4 L591.2,210.0 L592.0,209.8 L592.7,209.5 L593.5,209.3 L594.3,209.1 L595.1,208.9 L595.9,208.7 L596.7,208.6 L597.5,208.4 L598.4,208.3 L599.2,208.3 L600.0,208.2 L600.8,208.2 L601.7,208.2 L602.5,208.2 L603.3,208.3 L604.2,208.4 L605.0,208.5 L605.8,208.6 L606.6,208.7 L607.5,208.9 L608.3,209.1 L609.1,209.3 L609.9,209.6 L610.7,209.8 L611.5,210.1 L612.3,210.4 L613.0,210.8 L613.8,211.1 L614.5,211.5 L615.3,211.9 L616.0,212.3 L616.7,212.8 L617.4,213.2 L618.1,213.7 L618.7,214.2 L619.4,214.7 L620.0,215.3 L620.6,215.8 L621.2,216.4 L621.8,217.0 L622.4,217.6 L622.9,218.2 L623.4,218.8 L623.9,219.4 L624.4,220.1 L624.8,220.8 L625.3,221.4 L625.7,222.1 L626.1,222.8 L626.4,223.6 L626.8,224.3 L627.1,225.0 L627.4,225.7 L627.6,226.5 L627.9,227.2 L628.1,228.0 L628.2,228.7 L628.4,229.5 L628.5,230.3 L628.6,231.0 L628.7,231.8 L628.8,232.6 L628.8,233.3 L628.8,234.1 L628.8,234.9"/><path d="M579.2,220.9 L579.2,220.1 L579.3,219.4 L579.4,218.6 L579.5,217.9 L579.7,217.1 L579.9,216.4 L580.1,215.7 L580.3,214.9 L580.6,214.2 L580.9,213.5 L581.2,212.8 L581.5,212.1 L581.9,211.4 L582.2,210.8 L582.6,210.1 L583.1,209.5 L583.5,208.9 L584.0,208.2 L584.5,207.7 L585.0,207.1 L585.5,206.5 L586.1,206.0 L586.7,205.4 L587.2,204.9 L587.9,204.4 L588.5,204.0 L589.1,203.5 L589.8,203.1 L590.5,202.7 L591.2,202.3 L591.9,201.9 L592.6,201.5 L593.3,201.2 L594.1,200.9 L594.8,200.6 L595.6,200.4 L596.4,200.1 L597.2,199.9 L598.0,199.7 L598.8,199.6 L599.6,199.4 L600.4,199.3 L601.2,199.2 L602.0,199.1 L602.8,199.1 L603.7,199.1 L604.5,199.1 L605.3,199.1 L606.2,199.2 L607.0,199.2 L607.8,199.3 L608.7,199.5 L609.5,199.6 L610.3,199.8 L611.1,200.0 L611.9,200.2 L612.7,200.4 L613.5,200.7 L614.3,201.0 L615.1,201.3 L615.9,201.6 L616.6,202.0 L617.4,202.4 L618.1,202.8 L618.8,203.2 L619.5,203.6 L620.2,204.1 L620.9,204.6 L621.6,205.1 L622.2,205.6 L622.9,206.1 L623.5,206.7 L624.1,207.2 L624.6,207.8 L625.2,208.4 L625.7,209.0 L626.3,209.7 L626.8,210.3 L627.2,211.0 L627.7,211.6 L628.1,212.3 L628.5,213.0 L628.9,213.7 L629.3,214.4 L629.6,215.1 L629.9,215.9 L630.2,216.6 L630.5,217.3 L630.7,218.1 L630.9,218.8 L631.1,219.6 L631.2,220.4 L631.4,221.1 L631.5,221.9 L631.6,222.7 L631.6,223.4 L631.7,224.2 L631.7,225.0 L631.6,225.7"/>
<path d="M690.5,240.6 L693.3,231.4 L631.6,225.7 L628.8,234.9Z"/>
</g>
<!-- sketch rectangle -->
<g stroke="#0000ff" stroke-width="1.9" fill="none" stroke-linejoin="round">
<path d="M517.8,214.7 L579.5,221 L576.2,229.7 L514.7,224.4Z"/>
</g>
<g fill="#0000ff"><circle cx="517.8" cy="214.7" r="2.3"/><circle cx="579.5" cy="221" r="2.3"/><circle cx="576.2" cy="229.7" r="2.3"/><circle cx="514.7" cy="224.4" r="2.3"/></g>
<!-- relation symbols -->
<g>
<rect x="524" y="214" width="12" height="12" fill="#00c832"/><rect x="529" y="215" width="2" height="10" fill="#101010"/>
<rect x="585" y="219" width="12" height="12" fill="#00c832"/><rect x="590" y="220" width="2" height="10" fill="#101010"/>
<rect x="542" y="226" width="12" height="12" fill="#00c832"/><rect x="543" y="231" width="10" height="2" fill="#101010"/>
<rect x="539" y="235" width="12" height="12" fill="#00c832"/><rect x="540" y="240" width="10" height="2" fill="#101010"/>
</g>
<!-- small plus near axis -->
<path d="M599.5,223.4 L605,223.4 M602.3,220.5 L602.3,226.3" stroke="#5aa0f0" stroke-width="1"/>
<!-- direction handle arrow -->
<defs><linearGradient id="gar" x1="0" y1="0" x2="1" y2="0"><stop offset="0" stop-color="#c8c8c8"/><stop offset="0.45" stop-color="#8e8e8e"/><stop offset="1" stop-color="#6a6a6a"/></linearGradient></defs>
<rect x="544.6" y="207" width="4.6" height="15.5" rx="1" fill="url(#gar)"/>
<rect x="544" y="221" width="5.8" height="2" rx="0.8" fill="#c4c4c0"/>
<path d="M548,195.2 L555.2,207.2 Q548,210.5 539.2,207.2Z" fill="url(#gar)"/>
<!-- origin triad -->
<path d="M692.500,223 L693.700,200" stroke="#1a1aff" stroke-width="1.300"/><path d="M693.900,193.800 L691,201.700 L696.800,201.700Z" fill="#1a1aff"/>
<path d="M692.400,223.400 L701,224.400" stroke="#b0206a" stroke-width="1.300"/><path d="M708.700,224.900 L700.300,221.300 L700.300,227.200Z" fill="#ff1010"/>
<path d="M692.600,223 L695,214" stroke="#e01010" stroke-width="1.100"/><path d="M696,210.600 L693,214.200 L698,214.800Z" fill="#ff1010"/>
<path d="M688.900,223.400 L695.900,223.400 M692.400,219.900 L692.400,226.900 M689.900,220.900 L694.900,225.900 M694.900,220.900 L689.900,225.900" stroke="#ff0000" stroke-width="1"/>
<circle cx="692.400" cy="223.400" r="1.300" fill="#ff0000"/>
<!-- pink vertex -->
<circle cx="770.6" cy="253.6" r="4.2" fill="#ff80c0" stroke="#000" stroke-width="1"/>

</svg>

<svg class="abs" style="left:0;top:0;pointer-events:none" width="1172" height="727" viewBox="0 0 1172 727">
<defs>
<linearGradient id="bl" x1="0" y1="0" x2="1" y2="1"><stop offset="0" stop-color="#bfe0ff"/><stop offset="1" stop-color="#2f78d8"/></linearGradient>
<linearGradient id="bl2" x1="0" y1="0" x2="1" y2="0"><stop offset="0" stop-color="#e8eef8"/><stop offset="0.5" stop-color="#7fb0ee"/><stop offset="1" stop-color="#2f66cc"/></linearGradient>
<radialGradient id="gs" cx="0.4" cy="0.35" r="0.75"><stop offset="0" stop-color="#b4b6be"/><stop offset="1" stop-color="#9a9ca6"/></radialGradient>
<linearGradient id="wc" x1="0" y1="0" x2="0" y2="1"><stop offset="0" stop-color="#eceef3"/><stop offset="1" stop-color="#d4d7e0"/></linearGradient>
</defs>
<!-- zoom to fit -->
<path d="M555.600,16.500 L559.500,20.400" stroke="#3a78d6" stroke-width="3.200" stroke-linecap="round"/>
<path d="M555.800,16.500 L559.400,20.100" stroke="#b4d8ff" stroke-width="1" stroke-linecap="round"/>
<circle cx="551.300" cy="12.200" r="5.300" fill="#e1e4ec" stroke="#8a8d9a" stroke-width="1.500"/>
<circle cx="551.300" cy="12.200" r="2.600" fill="#c9ccd6" stroke="#5a5e6a" stroke-width="0.9" stroke-dasharray="1.700,1"/>
<path d="M548,12.200 L549.300,12.200 M553.300,12.200 L554.600,12.200 M551.300,8.900 L551.300,10.200 M551.300,14.200 L551.300,15.500" stroke="#4a4e5a" stroke-width="1"/>
<!-- zoom area -->
<path d="M578.600,16.300 L582.500,20.200" stroke="#3a78d6" stroke-width="3.200" stroke-linecap="round"/>
<path d="M578.800,16.300 L582.400,19.900" stroke="#b4d8ff" stroke-width="1" stroke-linecap="round"/>
<circle cx="574.300" cy="12" r="5.300" fill="#e1e4ec" stroke="#8a8d9a" stroke-width="1.500"/>
<rect x="568.500" y="6.500" width="9.500" height="8.500" fill="none" stroke="#50545f" stroke-width="1" stroke-dasharray="2,1.300"/>
<path d="M574.500,9 L574.500,13.500 L571,13.500" fill="none" stroke="#6a6e7a" stroke-width="0.9"/>
<!-- previous view -->
<path d="M591.800,8.900 L593.400,7.200 L607,15 L602.600,21.400 Z" fill="#3f86e0" stroke="#2a62c4" stroke-width="0.7" stroke-linejoin="round"/>
<path d="M593,8.300 L605.200,16 L603.800,18.800 Z" fill="#cfe8ff"/>
<path d="M595.500,9.300 L598.500,14.500 M598,10.800 L601,16.500" stroke="#e8f4ff" stroke-width="0.9"/>
<ellipse cx="604.700" cy="18.200" rx="3.500" ry="2.100" fill="#eaf5ff" stroke="#2a62c4" stroke-width="0.8" transform="rotate(-58 604.400 18.300)"/>
<path d="M601.200,9 L607,9 M601,9 L603.600,6.700 M601,9 L603.600,11.300" stroke="#2f6fd0" stroke-width="1.300" fill="none"/>
<!-- section view (disabled) -->
<path d="M615.5,9 Q622,4.5 628.5,9 L628.5,19 Q625.5,21.5 623.5,18.5 L620.5,18.5 Q618.5,21.5 615.5,19Z" fill="#a2a4ad" stroke="#9496a0" stroke-width="0.7"/>
<path d="M617.5,10 L617.5,18 M626.5,10 L626.5,18" stroke="#b8bac2" stroke-width="1" stroke-dasharray="1.2,1.2"/>
<!-- view orientation -->
<path d="M642.5,6.5 L652.5,6.5 L652.5,16.5 L648,21.5 M637.5,11.5 L642.5,6.5 M648,11.5 L652.5,6.5 M642.5,6.5 L642.5,11.5 M652.5,16.5 L648,16.5" fill="none" stroke="#2a2a2a" stroke-width="0.9"/>
<rect x="637.5" y="11.5" width="10.5" height="10" fill="url(#bl)" stroke="#2858b8" stroke-width="1"/>
<path d="M645.5,7 L645.5,10.5 M644,9 L647,9 M649,14 L652,14 M649,14 L650.5,12.8 M649,14 L650.5,15.2" stroke="#e01818" stroke-width="0.9" fill="none"/>
<path d="M656.8,14 L662,14 L659.4,17.2Z" fill="#4a4a6e"/>
<!-- display style -->
<path d="M670.5,10.5 L675.5,6.5 L686,6.5 L686,17 L681,21.5 L670.5,21.5Z" fill="#f1f3f8" stroke="#4a4d58" stroke-width="1" stroke-linejoin="round"/>
<path d="M676,10.5 L681,6.8 L685.7,6.8 L685.7,16.8 L681,21.2 L676,21.2Z" fill="url(#bl2)"/>
<path d="M670.5,10.5 L681,10.5 L686,6.5 M681,10.5 L681,21.5" fill="none" stroke="#4a4d58" stroke-width="0.9"/>
<path d="M690.4,14 L695.6,14 L693,17.2Z" fill="#4a4a6e"/>
<!-- hide/show glasses -->
<g fill="#dfeaf8" stroke="#55585f" stroke-width="1.1">
<ellipse cx="706.5" cy="15" rx="2.7" ry="3.4" transform="rotate(-15 706.5 15)"/>
<ellipse cx="713.5" cy="17.5" rx="2.7" ry="3.4" transform="rotate(-15 713.5 17.5)"/>
</g>
<path d="M704.5,12 Q705,8.5 708,9 M715.5,14.5 Q716.5,12 719,12.8 M709,15.5 L711,16.2" fill="none" stroke="#55585f" stroke-width="1.1"/>
<path d="M723.2,14 L728.4,14 L725.8,17.2Z" fill="#4a4a6e"/>
<!-- appearance (disabled) -->
<circle cx="744" cy="14" r="7.8" fill="url(#gs)"/>
<!-- scene (disabled) -->
<rect x="759" y="14" width="16" height="7.5" fill="#a6a8b0"/>
<path d="M759,17.5 L775,17.5 M763,14 L763,21.5 M767,14 L767,21.5 M771,14 L771,21.5" stroke="#b9bbc3" stroke-width="0.8"/>
<circle cx="767" cy="12.2" r="6.3" fill="url(#gs)"/>
<path d="M779,14 L784.2,14 L781.6,17.2Z" fill="#4a4a6e"/>
<!-- view settings monitor -->
<rect x="792.5" y="8" width="14.5" height="11" fill="#eef0f5" stroke="#3e4048" stroke-width="1.4"/>
<rect x="794.5" y="10" width="10.5" height="7" fill="#cfd6e6" stroke="#8a8f9c" stroke-width="0.6"/>
<path d="M795,15.5 L798.5,12 L801,14.5 L804.5,11" fill="none" stroke="#6a7088" stroke-width="0.8"/>
<path d="M796,21.3 L804,21.3 M799.8,19.5 L799.8,21" stroke="#3e4048" stroke-width="1.2"/>
<path d="M796,10.5 L800,6.8 L802,6 L807.5,6.4 L808,8.4 L806,10 L803.5,10 L802,12.5 L800,11Z" fill="#f1c58e" stroke="#b77b36" stroke-width="0.7"/>
<path d="M812,14 L817.2,14 L814.6,17.2Z" fill="#4a4a6e"/>

<!-- window controls -->
<g stroke="#787b88" stroke-width="1.2" fill="url(#wc)">
<rect x="1056.6" y="8.8" width="11.8" height="11.4" rx="0.8"/>
<rect x="1079.7" y="8.8" width="11.8" height="11.4" rx="0.8"/>
<rect x="1102.6" y="16.8" width="10.8" height="3.4" rx="0.8"/>
<rect x="1127" y="8.8" width="11.2" height="7.6" rx="0.8"/>
<rect x="1123.4" y="12.6" width="11.2" height="7.6" rx="0.8"/>
</g>
<rect x="1125.6" y="14.8" width="6.8" height="3.2" fill="#c5c9d5" stroke="#787b88" stroke-width="0.9"/>
<path d="M1062.2,11.5 L1059,14.5 L1062.2,17.5Z M1063.6,11.3 L1065.8,11.3 L1065.8,17.7 L1063.6,17.7Z" fill="#6a6d7a"/>
<path d="M1085.8,11.5 L1089,14.5 L1085.8,17.5Z M1082.2,11.3 L1084.4,11.3 L1084.4,17.7 L1082.2,17.7Z" fill="#6a6d7a"/>
<path d="M1149.3,10.2 L1159.7,19 M1159.7,10.2 L1149.3,19" stroke="#787b88" stroke-width="4.200" fill="none"/>
<path d="M1149.3,10.2 L1159.7,19 M1159.7,10.2 L1149.3,19" stroke="#e8eaf0" stroke-width="2.100" fill="none"/>

<!-- confirmation corner -->
<path d="M1074.3,45 L1081.4,52 L1096.6,36.6" fill="none" stroke="#aab6b4" stroke-width="4.600" stroke-linejoin="miter" stroke-linecap="butt"/>
<path d="M1074.3,45 L1081.4,52 L1096.6,36.6" fill="none" stroke="#a9d6ab" stroke-width="2.800" stroke-linejoin="miter" stroke-linecap="butt"/>
<path d="M1108.4,65.6 L1127.4,84.6 M1127.4,65.6 L1108.4,84.6" fill="none" stroke="#bca8b2" stroke-width="4.400" stroke-linecap="butt"/>
<path d="M1108.4,65.6 L1127.4,84.6 M1127.4,65.6 L1108.4,84.6" fill="none" stroke="#dba9b3" stroke-width="2.600" stroke-linecap="butt"/>

<!-- task pane tabs -->
<g stroke="#767b94" stroke-width="1">
<path d="M1173,60.5 L1152,60.5 Q1148.5,60.5 1148.5,64 L1148.5,79.5 Q1148.5,83 1152,83 L1173,83Z" fill="#eceef5"/>
<path d="M1173,85 L1152,85 Q1148.500,85 1148.500,88.500 L1148.500,103.500 Q1148.500,107 1152,107 L1173,107Z" fill="#b4b8cc"/>
<path d="M1173,109.2 L1152,109.2 Q1148.500,109.2 1148.500,112.7 L1148.500,127.7 Q1148.500,131.2 1152,131.2 L1173,131.2Z" fill="#b4b8cc"/>
<path d="M1173,133.400 L1152,133.400 Q1148.500,133.400 1148.500,136.900 L1148.500,151.400 Q1148.500,154.900 1152,154.900 L1173,154.900Z" fill="#b4b8cc"/>
<path d="M1173,157.2 L1152,157.2 Q1148.500,157.2 1148.500,160.7 L1148.500,175.500 Q1148.500,179 1152,179 L1173,179Z" fill="#b4b8cc"/>
<path d="M1173,181.2 L1152,181.2 Q1148.500,181.2 1148.500,184.7 L1148.500,199.700 Q1148.500,203.200 1152,203.200 L1173,203.200Z" fill="#b4b8cc"/>
</g>
<!-- home -->
<rect x="1164.400" y="65" width="2" height="5" fill="#d02020"/>
<rect x="1155" y="72" width="11.500" height="7.400" fill="#fff9d0" stroke="#2a2a2a" stroke-width="0.8"/>
<path d="M1153.600,72.800 L1160.500,65.800 L1167.400,72.800" fill="none" stroke="#c88a00" stroke-width="2.400" stroke-linejoin="miter"/>
<path d="M1153.900,72.300 L1160.500,65.700 L1167.100,72.300" fill="none" stroke="#ffe060" stroke-width="1"/>
<rect x="1159.200" y="74" width="3" height="5.400" fill="#e8b000" stroke="#7a5200" stroke-width="0.7"/>
<!-- library books -->
<g transform="translate(-1.600,0)">
<path d="M1154.500,94.500 L1158,92 L1158,103 L1154.500,101Z" fill="#1f9a34" stroke="#0a6a1a" stroke-width="0.6"/>
<rect x="1158" y="93" width="3" height="10.300" fill="#3fcf4f" stroke="#0a6a1a" stroke-width="0.6"/>
<path d="M1156,92.500 L1158.500,91 L1161,92.800" fill="#f4f4f4" stroke="#888" stroke-width="0.400"/>
<path d="M1161,91.500 L1163.500,90 L1163.500,103.300 L1161,103.300Z" fill="#e8b818" stroke="#8a6a00" stroke-width="0.6"/>
<rect x="1163.500" y="90.500" width="2.600" height="12.800" fill="#ffe860" stroke="#8a6a00" stroke-width="0.6"/>
<path d="M1166.100,90 L1168.200,88.200 L1170.400,90.500 L1170.400,103.300 L1166.100,103.300Z" fill="#4a78d8" stroke="#1c3c8a" stroke-width="0.6"/>
<rect x="1166.700" y="91.500" width="1.500" height="11" fill="#dce8ff"/>
</g>
<!-- folder -->
<g transform="translate(-1.600,-0.600)">
<path d="M1154.500,114.500 L1159,114.500 L1160.500,116.200 L1167,116.200 L1167,125.800 L1154.500,125.800Z" fill="#f0b828" stroke="#b07000" stroke-width="1"/>
<path d="M1157.300,119 L1170.500,119 L1167,125.800 L1154.500,125.800Z" fill="#fff09a" stroke="#c08400" stroke-width="1" stroke-linejoin="round"/>
</g>
<!-- view palette -->
<rect x="1153.500" y="135.500" width="15.200" height="11" fill="#f2f4fc" stroke="#343a6a" stroke-width="1"/>
<path d="M1161.800,135.500 L1161.800,146.500 M1153.500,141 L1168.700,141" stroke="#5a6090" stroke-width="0.8"/>
<rect x="1155" y="137.200" width="5.400" height="1.800" fill="#f4c400"/>
<rect x="1163.600" y="137.200" width="3.400" height="1.800" fill="#f4c400"/>
<path d="M1155,145 L1156.800,142.500 L1158.800,142.500 L1160.500,145Z" fill="#f4c400"/>
<rect x="1163.200" y="142.300" width="4.400" height="1.200" fill="#7aa0e0"/><rect x="1163.200" y="144" width="4.400" height="1.600" fill="#fff"/>
<path d="M1154,150 L1159,150" stroke="#0808c8" stroke-width="1.800"/><path d="M1161.300,150 L1157.600,147.300 L1157.600,152.700Z" fill="#0808c8"/>
<!-- appearances ball -->
<clipPath id="cb2"><circle cx="1161.500" cy="167.500" r="7.300"/></clipPath>
<g clip-path="url(#cb2)">
<rect x="1153" y="159" width="17" height="17" fill="#f4d21a"/>
<path d="M1153,159 L1161.500,159 L1161.500,167.500 L1153,169.500Z" fill="#2f62e0"/>
<path d="M1161.500,159 L1170,159 L1170,170 L1161.500,167.500Z" fill="#e82828"/>
<path d="M1153,169.500 L1161.500,167.500 L1160,176 L1153,176Z" fill="#38b838"/>
<ellipse cx="1159" cy="163.500" rx="2.200" ry="1.600" fill="#fff" opacity="0.55"/>
</g>
<ellipse cx="1161.500" cy="176.300" rx="6" ry="1.100" fill="#6a6d80" opacity="0.5"/>
<!-- custom properties -->
<rect x="1153.800" y="189.600" width="12.800" height="9.600" fill="#f6f6f2" stroke="#6a6a68" stroke-width="1.100"/>
<path d="M1156,193 L1164.500,193 M1156,195.200 L1164.500,195.200 M1156,197.300 L1164.500,197.300" stroke="#a8a8a6" stroke-width="0.8"/>
<path d="M1156.500,190.500 L1160.500,186 L1162.500,185 L1168.500,185.300 L1169,187.600 L1167,189.200 L1164.500,189.200 L1163,191.800 L1160.500,189.800 L1158,191.600Z" fill="#ecc08a" stroke="#a86c2a" stroke-width="0.7"/>
<path d="M1162.500,185.400 L1168.300,185.700 L1168.600,187.400 L1166.800,188.600 L1164,188.200Z" fill="#f8e0c0"/>
<!-- feature tree part icon -->
<rect x="213" y="23.300" width="5.800" height="15.200" rx="1.300" fill="#0c0c0c"/>
<circle cx="216" cy="30" r="2.200" fill="#ff2a10"/><circle cx="215.500" cy="29.400" r="0.700" fill="#ff9a80"/>
<circle cx="216" cy="35.700" r="2.200" fill="#18e018"/><circle cx="215.500" cy="35.100" r="0.700" fill="#a8ffa8"/>
<circle cx="215.600" cy="25.500" r="1.300" fill="#ffd21c"/>
<g stroke="#120d00" stroke-width="1.200" stroke-linejoin="round">
<path d="M219,24.600 L221,22.800 L224,22.800 L225.300,24.400 L225.300,27.600 L228.800,30.800 L228.800,34.600 L223.800,37.800 L219,32.200Z" fill="#ffd000"/>
<path d="M219,27.800 L223.800,33.600 L223.800,37.800 L219,32.200Z" fill="#ffe23a"/>
<path d="M223.800,33.600 L228.800,30.800 L228.800,34.600 L223.800,37.800Z" fill="#d89a00"/>
<path d="M221,22.800 L224,22.800 L225.300,24.400 L222.300,25Z" fill="#fff06a"/>
<path d="M222.300,25 L225.300,24.400 L225.300,27.600 L222.500,28.600Z" fill="#e0a800"/>
</g>
<!-- view triad bottom-left -->
<path d="M236.700,670.500 L236.700,648" stroke="#1a661a" stroke-width="4.200"/>
<path d="M236,668 L236,649" stroke="#2f8a2f" stroke-width="1.200"/>
<path d="M237,641 L232,651.500 L242,651.500Z" fill="#1a6e1a"/>
<path d="M237,642.500 L235,650 L237.500,650Z" fill="#58c058"/>
<path d="M237,669 L258,672" stroke="#c81e1e" stroke-width="3"/>
<path d="M237,668.200 L258,671.200" stroke="#ff6a6a" stroke-width="0.9"/>
<path d="M266.500,673 L256.500,667 L256,676.500Z" fill="#c81e1e"/>
<path d="M236.500,669 L233,677" stroke="#18187a" stroke-width="4.200"/>
<circle cx="233" cy="677.300" r="4.200" fill="#1212b0"/>
<circle cx="232" cy="676.300" r="1.400" fill="#3a3af0"/>
</svg>

<div id="tabs">
 <div class="tab" style="left:-15px;width:56px;">草图</div>
 <div class="tab" style="left:42px;width:52px;padding-right:3px;">评估</div>
 <div class="tab" style="left:98px;width:66px;">DimXpert</div>
 <div class="tab" style="left:165px;width:73px;">办公室产品</div>
</div>
<div id="topline"></div>
<div id="tabsub"></div>
<!-- feature tree flyout -->
<div class="abs" style="left:197px;top:27px;width:9px;height:9px;border:1px solid #a9a493;background:#c9ccd6;box-sizing:border-box;"></div>
<div class="abs" style="left:199px;top:31px;width:5px;height:1px;background:#000;"></div>
<div class="abs" style="left:201px;top:29px;width:1px;height:5px;background:#000;"></div>
<div class="abs" style="left:206px;top:31px;width:6px;height:1px;background:#aaa593;"></div>
<div class="abs" style="left:233px;top:25px;line-height:16px;font-size:12px;color:#000;white-space:nowrap;">零件1</div>
<div class="abs" style="left:278px;top:25px;line-height:16px;font-size:12px;color:#000;white-space:nowrap;letter-spacing:0.2px;">(默认&lt;&lt;默认&gt;_显...</div>
<!-- watermark -->
<div class="abs wm" style="left:951px;top:705px;font-size:14px;transform:scaleX(1.27);">三维网</div>
<div class="abs wm" style="left:1006px;top:704px;font-size:15px;transform:scaleX(1.25);">www.3dportal.cn</div>
<div class="abs ax" style="left:233.500px;top:631.500px;color:#128012;">Y</div>
<div class="abs ax" style="left:264.500px;top:667.500px;color:#f01414;">X</div>
<div class="abs ax" style="left:228px;top:678.500px;color:#1010f0;">Z</div>

<div id="panel"></div>
<div id="pleft"></div>
<div id="pborder"></div>
<div id="pbot"></div>
<div id="ptop"><div class="l1"></div><div class="l2"></div><div class="l3"></div>
 <div class="itab" style="left:1px;"></div>
 <div class="itab act" style="left:29px;"></div>
 <div class="itab" style="left:57px;"></div>
 <div class="itab" style="left:85px;"></div>
 <div class="itab" style="left:113px;"></div>
</div>
<div id="title"><span class="t">旋转</span><span class="q">?</span></div>

<!-- section: axis -->
<div class="sec" style="top:110px;height:53px;">
 <div class="hd"><span class="tx">旋转轴(<u>A</u>)</span>
  <svg width="10" height="12" viewBox="0 0 10 12"><path d="M1.400,5.200 L5,1.600 L8.600,5.200 M1.400,10 L5,6.400 L8.600,10" fill="none" stroke="#444860" stroke-width="1.400"/></svg></div>
 <div class="inp" style="left:36px;top:24px;width:140px;height:19px;line-height:19px;"><span style="margin-left:3px;letter-spacing:0.6px;position:relative;top:1px;">边线&lt;1&gt;</span></div>
</div>
<!-- section: direction 1 -->
<div class="sec" style="top:172px;height:109px;">
 <div class="hd"><span class="tx">方向<u>1</u></span>
  <svg width="10" height="12" viewBox="0 0 10 12"><path d="M1.400,5.200 L5,1.600 L8.600,5.200 M1.400,10 L5,6.400 L8.600,10" fill="none" stroke="#444860" stroke-width="1.400"/></svg></div>
 <div class="abs" style="left:4px;top:22px;width:22px;height:22px;border:1px solid #8f8f94;border-radius:4px;background:linear-gradient(#eceef5,#d8dbe6);"></div>
 <div class="inp" style="left:36px;top:24px;width:140px;height:19px;line-height:19px;border-color:#7f9dc4;"><span style="margin-left:2px;color:#2a2e40;position:relative;top:1px;letter-spacing:0.2px;">成形到一顶点</span>
   <div class="abs" style="right:1px;top:1px;width:15px;height:17px;border:1px solid #a9c0e6;box-sizing:border-box;border-radius:2px;background:linear-gradient(#dfe8fa,#b8ccf2);"></div>
 </div>
 <div class="abs" style="left:34px;top:54px;width:11px;height:21px;background:#ff80c0;border:1px solid #fff;border-left-color:#a9a9a4;border-top-color:#a9a9a4;box-sizing:border-box;"></div>
 <div class="abs" style="left:46px;top:54px;width:130px;height:21px;box-sizing:border-box;border:1px solid #8ec8ee;background:#d8ecfa;box-shadow:inset 0 0 0 1px #52aae6, inset 0 0 0 2px #9fd0f2;">
   <div class="abs" style="left:2px;top:2px;width:124px;height:13px;background:#316ac5;color:#fff;font-size:12px;line-height:13px;white-space:nowrap;"><span style="margin-left:1px;letter-spacing:0.6px;position:relative;top:1px;">顶点&lt;1&gt;</span></div>
 </div>
 <div class="cb" style="left:34px;top:88px;width:11px;height:11px;"></div>
 <div class="abs" style="left:50px;top:86px;line-height:16px;font-size:12px;color:#111;white-space:nowrap;">合并结果<span style="letter-spacing:-0.6px">(<u>M</u>)</span></div>
</div>
<!-- closed sections -->
<div class="sec closed" style="top:290px;height:18px;">
 <div class="hd"><div class="cb" style="left:4px;top:2px;"></div><span class="tx" style="left:20px;">方向<u>2</u></span>
  <svg width="10" height="12" viewBox="0 0 10 12"><path d="M1.400,1.600 L5,5.200 L8.600,1.600 M1.400,6.400 L5,10 L8.600,6.400" fill="none" stroke="#444860" stroke-width="1.400"/></svg></div>
</div>
<div class="sec closed" style="top:322px;height:18px;">
 <div class="hd"><div class="cb" style="left:6px;top:2px;"></div><span class="tx" style="left:21px;">薄壁特征(<u>T</u>)</span>
  <svg width="10" height="12" viewBox="0 0 10 12"><path d="M1.400,1.600 L5,5.200 L8.600,1.600 M1.400,6.400 L5,10 L8.600,6.400" fill="none" stroke="#444860" stroke-width="1.400"/></svg></div>
</div>
<div class="sec closed" style="top:354px;height:18px;">
 <div class="hd"><span class="tx">所选轮廓(<u>S</u>)</span>
  <svg width="10" height="12" viewBox="0 0 10 12"><path d="M1.400,1.600 L5,5.200 L8.600,1.600 M1.400,6.400 L5,10 L8.600,6.400" fill="none" stroke="#444860" stroke-width="1.400"/></svg></div>
</div>
<!-- collapse handle -->
<svg class="abs" style="left:196px;top:348px;" width="10" height="32" viewBox="0 0 10 32"><path d="M1,1.500 L5.500,1.500 Q7.500,1.500 7.500,3.500 L7.500,28.500 Q7.500,30.500 5.500,30.500 L1,30.500" fill="#d0d3de" stroke="#8f94aa" stroke-width="1"/>
<path d="M5.800,4.500 L2.800,7 L5.800,9.500Z M5.800,12.500 L2.800,15 L5.800,17.500Z M5.800,20.500 L2.800,23 L5.800,25.500Z" fill="#5a50b0"/></svg>

<svg class="abs" style="left:0;top:0;pointer-events:none;z-index:5" width="240" height="400" viewBox="0 0 240 400">
<defs>
<linearGradient id="yel" x1="0" y1="0" x2="1" y2="1"><stop offset="0" stop-color="#fff36a"/><stop offset="0.5" stop-color="#ffd400"/><stop offset="1" stop-color="#d89a00"/></linearGradient>
<radialGradient id="ball" cx="0.4" cy="0.35" r="0.7"><stop offset="0" stop-color="#fff"/><stop offset="1" stop-color="#ddd"/></radialGradient>
</defs>
<!-- tab1: part icon -->
<g stroke="#120d00" stroke-width="1.2" stroke-linejoin="round">
<path d="M6.2,33.8 L9.8,31.8 L12,33.6 L12.4,31.8 L15.6,31.2 L17.6,33 L17.8,36.6 L21.6,40.2 L21.6,43.4 L15.8,46.8 L6.2,37.2Z" fill="#ffd400"/>
<path d="M6.2,33.8 L15.8,43.4 L15.8,46.8 L6.2,37.2Z" fill="#ffe340"/>
<path d="M15.8,43.4 L21.6,40.2 L21.6,43.4 L15.8,46.8Z" fill="#d89a00"/>
<path d="M14.4,34 L17.6,33 L17.8,36.6 L14.6,38Z" fill="#e0a800"/>
<path d="M12.4,31.8 L15.6,31.2 L17.6,33 L14.4,34Z" fill="#fff06a"/>
<path d="M9.8,31.800 L18.500,40 M14.600,38 L18,41.800" fill="none" stroke-width="0.9"/>
</g>
<!-- tab2: property manager -->
<rect x="34.5" y="35.5" width="13" height="12" fill="#fbfbfd" stroke="#3a4378" stroke-width="1.2"/>
<rect x="35" y="36" width="12" height="1.6" fill="#6a74a6"/>
<rect x="36" y="39" width="2.6" height="2.6" fill="#f5a300"/>
<rect x="40.5" y="39.2" width="5.5" height="2.2" fill="#9bd4ee" stroke="#8a8f9c" stroke-width="0.5"/>
<rect x="36.3" y="43.3" width="2.2" height="2.2" fill="#fff" stroke="#8a8f9c" stroke-width="0.7"/>
<rect x="40.5" y="44" width="5.5" height="1" fill="#8a8f9c"/>
<path d="M37.5,38.5 L42.5,33.2 L44.5,32.2 L49.5,32.6 L50,34.8 L48.5,36.4 L46.2,36.4 L44.5,39.2 L42.5,37.5 L39,39.5Z" fill="#f1c58e" stroke="#b77b36" stroke-width="0.7"/>
<path d="M44,32.6 L49.5,33 L49.8,35 L48.2,36 L45.5,35.6Z" fill="#f8dcb8"/>
<!-- tab3: configuration manager -->
<path d="M62.5,32 L62.5,47 M62.5,36 L67,36 M62.5,43.5 L69,43.5" fill="none" stroke="#555" stroke-width="1.3"/>
<path d="M61.3,32 L61.3,47" stroke="#e4e4e4" stroke-width="0.8"/>
<rect x="66.8" y="32.3" width="6.6" height="6.4" rx="1.6" fill="url(#yel)" stroke="#000" stroke-width="1.3"/>
<rect x="69.8" y="40.3" width="6.6" height="6.4" rx="1.6" fill="url(#yel)" stroke="#000" stroke-width="1.3"/>
<!-- tab4: crosshair -->
<g stroke="#cf4fe0" stroke-width="1.5" fill="none">
<path d="M98,33.8 L102,35.5 L103.8,39 L102,42.6 L98,44.3 L94,42.6 L92.2,39 L94,35.5Z"/>
<path d="M90,39 L106,39 M98,31 L98,47"/>
</g>
<!-- tab5: colour ball -->
<clipPath id="cb"><circle cx="126.2" cy="39" r="7.8"/></clipPath>
<g clip-path="url(#cb)">
<rect x="118" y="31" width="17" height="17" fill="#e82020"/>
<path d="M118,31 L124.5,31 Q121.5,36 122,41 L118,41Z" fill="#2d52d8"/>
<path d="M118,39.5 Q120,41.3 122.2,41 Q122.5,44 124,47 L118,47Z" fill="#2fbf2f"/>
<path d="M122.2,41 Q128,42.3 134.5,40 L135,48 L124,48 Q122.5,44 122.2,41Z" fill="#f7e01a"/>
<ellipse cx="130.6" cy="37" rx="2" ry="3.1" fill="#14102a" transform="rotate(-20 130.6 37)"/>
<ellipse cx="123.6" cy="36.5" rx="1" ry="0.9" fill="#fff" opacity="0.9"/>
</g>
<circle cx="126.2" cy="39" r="7.8" fill="none" stroke="#a06030" stroke-width="0.6" opacity="0.7"/>
<!-- title icon: revolve -->
<path d="M7.400,64.600 Q7.600,60.800 12.400,60.800 Q17.300,60.800 17.500,64.600" fill="none" stroke="#0e0a00" stroke-width="5.400" stroke-linecap="round"/>
<path d="M7.400,64.600 Q7.600,60.800 12.400,60.800 Q17.300,60.800 17.500,64.600" fill="none" stroke="#ffcf10" stroke-width="3.200" stroke-linecap="round"/>
<path d="M8,62 Q9.500,60.300 12.400,60.200 Q15.400,60.300 16.900,62" fill="none" stroke="#fff6a8" stroke-width="0.9"/>
<circle cx="7.300" cy="64.300" r="1" fill="#fff4a0"/><circle cx="17.300" cy="64.300" r="1" fill="#fff4a0"/>
<path d="M12.400,55 L12.400,71" stroke="#000" stroke-width="1" stroke-dasharray="2.2,1.3"/>
<!-- OK / cancel -->
<path d="M6.3,89.8 L10.6,93.6 L19.6,83.6" fill="none" stroke="#0b7a0b" stroke-width="3.6" stroke-linejoin="miter"/>
<path d="M6.3,89.8 L10.6,93.6 L19.6,83.6" fill="none" stroke="#1fd61f" stroke-width="2.2" stroke-linejoin="miter"/>
<path d="M33.3,83.6 L43.6,93.8 M43.6,83.6 L33.3,93.8" fill="none" stroke="#9c0a0a" stroke-width="3.4"/>
<path d="M33.3,83.6 L43.6,93.8 M43.6,83.6 L33.3,93.8" fill="none" stroke="#ee1c1c" stroke-width="2.1"/>
<!-- axis icon -->
<g fill="#0a7a0a" stroke="none">
<path d="M18.2,143.6 L19.6,142.200 L24.400,147 L23,148.400Z"/>
<rect x="16" y="140" width="2" height="2"/><rect x="24" y="148" width="2" height="2"/>
<path d="M13.600,137 L15,137 L15,138 L16,138 L16,139.400 L15,139.400 L15,140.400 L13.600,140.400 L13.600,139.400 L12.600,139.400 L12.600,138 L13.600,138Z"/>
<path d="M26.800,150.200 L28.200,150.200 L28.200,151.200 L29.200,151.200 L29.200,152.600 L28.200,152.600 L28.200,153.600 L26.800,153.600 L26.800,152.600 L25.800,152.600 L25.800,151.200 L26.800,151.200Z"/>
</g>
<!-- rotate button arrows -->
<path d="M13,208.800 A7.700,7.700 0 0 1 27.200,204.800" fill="none" stroke="#2a6be0" stroke-width="2.100"/>
<path d="M23.400,205 L30.600,204 L27.700,210.300Z" fill="#2a6be0"/>
<path d="M14.300,210.600 A7,7 0 0 0 26.600,213" fill="none" stroke="#8a8a8a" stroke-width="1.300"/>
<path d="M24.200,212 L28.900,209.400 L28.500,214.800Z" fill="#8a8a8a"/>
<!-- dropdown arrow -->
<path d="M169.8,205 L173.5,209 L177.2,205" fill="none" stroke="#26378a" stroke-width="2"/>
<!-- yellow cube -->
<g stroke="#8a5c00" stroke-width="0.9" stroke-linejoin="round">
<path d="M12.5,231.5 L16.5,234.5 L28.5,234.5 L25,231.2 L15,230.2Z" fill="#fff4a0"/>
<path d="M12.5,231.5 L16.5,234.5 L16.5,246.5 L12.5,242.5Z" fill="#e6b800"/>
<rect x="16.5" y="234.5" width="12" height="12" fill="url(#yel)"/>
</g>
<circle cx="27.5" cy="245.3" r="2" fill="#2fd02f" stroke="#0a7a0a" stroke-width="0.7"/>
<!-- checkbox check -->
<path d="M42,266 L44.7,269.5 L49.5,262.8" fill="none" stroke="#1fa01f" stroke-width="2.2"/>
</svg>

</div>
</body></html>
